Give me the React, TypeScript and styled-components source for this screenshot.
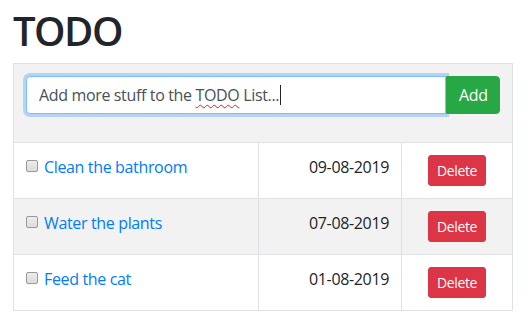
import * as React from 'react';
import styled, { createGlobalStyle } from 'styled-components';

interface ITodo {
  id: number;
  text: string;
  date: string;
}

const todos: ITodo[] = [
  { id: 1, text: 'Clean the bathroom', date: '09-08-2019' },
  { id: 2, text: 'Water the plants', date: '07-08-2019' },
  { id: 3, text: 'Feed the cat', date: '01-08-2019' },
];

export default function App() {
  return (
    <>
      <GlobalStyle />
      <Page>
        <Title>TODO</Title>
        <Table>
          <colgroup>
            <col style={{ width: 245 }} />
            <col style={{ width: 143 }} />
            <col style={{ width: 111 }} />
          </colgroup>
          <tbody>
            <Row $striped>
              <Cell colSpan={3}>
                <InputGroup>
                  <FakeInput>
                    Add more stuff to the <Misspelled>TODO</Misspelled> List...
                    <Caret />
                  </FakeInput>
                  <AddButton type='button'>Add</AddButton>
                </InputGroup>
              </Cell>
            </Row>
            {todos.map((todo, i) => (
              <Row key={todo.id} $striped={i % 2 === 1}>
                <Cell>
                  <TodoLabel>
                    <Check type='checkbox' />
                    <TodoLink href='#'>{todo.text}</TodoLink>
                  </TodoLabel>
                </Cell>
                <Cell $align='right'>{todo.date}</Cell>
                <Cell $align='center'>
                  <DeleteButton type='button'>Delete</DeleteButton>
                </Cell>
              </Row>
            ))}
          </tbody>
        </Table>
      </Page>
    </>
  );
}

const GlobalStyle = createGlobalStyle`
  body {
    margin: 0;
    background: #fff;
    color: #212529;
    font-family: 'Open Sans', 'Noto Sans', Arial, sans-serif;
    font-size: 16px;
    line-height: 1.5;
    letter-spacing: -0.35px;
  }
  * {
    box-sizing: border-box;
  }
`;

const Page = styled.div`
  padding: 7px 13px 0 13px;
`;

const Title = styled.h1`
  margin: 0 0 8px;
  font-size: 40px;
  font-weight: 600;
  line-height: 48px;
  letter-spacing: -1.5px;
  color: #212529;
`;

const Table = styled.table`
  width: 499px;
  border-collapse: collapse;
  table-layout: fixed;
`;

const Row = styled.tr<{ $striped?: boolean }>`
  background: ${(p) => (p.$striped ? '#f2f2f2' : '#fff')};
`;

const Cell = styled.td<{ $align?: 'left' | 'right' | 'center' }>`
  border: 1px solid #dee2e6;
  padding: 12px;
  vertical-align: top;
  text-align: ${(p) => p.$align || 'left'};
  line-height: 24px;
  color: #212529;
`;

const InputGroup = styled.div`
  display: flex;
  margin-bottom: 16px;
`;

const FakeInput = styled.div`
  flex: 1;
  height: 38px;
  padding: 6px 12px;
  border: 1px solid #80bdff;
  border-radius: 4px 0 0 4px;
  background: #fff;
  box-shadow: 0 0 0 3px rgba(0, 123, 255, 0.25);
  color: #495057;
  font-size: 16px;
  line-height: 24px;
  white-space: nowrap;
`;

const Misspelled = styled.span`
  text-decoration: underline wavy #e02020;
  text-decoration-thickness: 1px;
  text-underline-offset: 3px;
`;

const Caret = styled.span`
  display: inline-block;
  width: 1px;
  height: 20px;
  margin-left: 1px;
  background: #212529;
  vertical-align: -4px;
`;

const AddButton = styled.button`
  width: 54px;
  height: 38px;
  padding: 6px 12px;
  border: 1px solid #28a745;
  border-radius: 0 4px 4px 0;
  background: #28a745;
  color: #fff;
  font-family: inherit;
  font-size: 16px;
  line-height: 24px;
  letter-spacing: inherit;
`;

const TodoLabel = styled.div`
  display: flex;
  align-items: flex-start;
`;

const Check = styled.input`
  appearance: none;
  flex: none;
  width: 12px;
  height: 12px;
  margin: 5px 6px 0 0;
  border: 1px solid #9a9a9a;
  border-radius: 2px;
  background: linear-gradient(#ececec, #dcdcdc);
`;

const TodoLink = styled.a`
  color: #007bff;
  text-decoration: none;
`;

const DeleteButton = styled.button`
  height: 31px;
  padding: 4px 8px;
  border: 1px solid #dc3545;
  border-radius: 3px;
  background: #dc3545;
  color: #fff;
  font-family: inherit;
  font-size: 14px;
  line-height: 21px;
  letter-spacing: inherit;
`;
